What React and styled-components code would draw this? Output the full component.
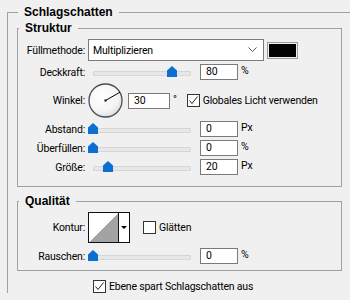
import React from "react";
import styled, { createGlobalStyle } from "styled-components";

const Global = createGlobalStyle`
  body {
    margin: 0;
    background: #f0f0f0;
    font-family: Roboto, "Liberation Sans", sans-serif;
    font-size: 10.5px;
    letter-spacing: -0.2px;
    color: #000;
    overflow: hidden;
  }
`;

const Outer = styled.fieldset`
  margin: 4px 0 0 7px;
  padding: 0 0 0 9px;
  width: 360px;
  border: 1px solid #a0a0a0;
  border-right: none;
  border-bottom: none;
  min-width: 0;
`;

const Legend = styled.legend`
  margin-left: 1px;
  padding: 0 6px;
  font-family: "Liberation Sans", Arial, sans-serif;
  font-weight: bold;
  font-size: 12px;
  letter-spacing: 0;
  line-height: 16px;
`;

const Group = styled.fieldset`
  margin: ${(p) => p.$top || 0}px 0 0 0;
  padding: 3px 0 ${(p) => p.$bottom || 0}px 0;
  width: 323px;
  border: 1px solid #a0a0a0;
  min-width: 0;
`;

const Rows = styled.div`
  display: flex;
  flex-direction: column;
  gap: ${(p) => p.$gap || 3}px;
`;

const Row = styled.div`
  display: flex;
  align-items: center;
  height: ${(p) => p.$h || 16}px;
`;

const Label = styled.span`
  width: 67px;
  margin-right: 3px;
  text-align: right;
  white-space: nowrap;
`;

const Select = styled.div`
  box-sizing: border-box;
  width: 176px;
  height: 22px;
  border: 1px solid #7a7a7a;
  background: #fff;
  display: flex;
  align-items: center;
  justify-content: space-between;
  padding: 0 6px 0 4px;
`;

const Swatch = styled.div`
  box-sizing: border-box;
  width: 31px;
  height: 17px;
  margin-left: 3px;
  border: 1px solid #9a9a9a;
  padding: 1px;
  background: #f0f0f0;
  &::after {
    content: "";
    display: block;
    width: 100%;
    height: 100%;
    background: #000;
  }
`;

const Slider = styled.div`
  position: relative;
  width: 108px;
  height: 16px;
  margin-right: 4px;
`;

const Track = styled.div`
  position: absolute;
  left: 5px;
  right: 5px;
  top: 7px;
  height: 3px;
  background: #e7e7e7;
  border: 1px solid #d6d6d6;
  border-radius: 1px;
`;

const Thumb = styled.div`
  position: absolute;
  top: 2px;
  left: ${(p) => p.$pos}px;
  width: 10px;
  height: 11px;
  background: #0b6fd1;
  clip-path: polygon(50% 0, 100% 40%, 100% 100%, 0 100%, 0 40%);
`;

const Field = styled.div`
  display: flex;
  align-items: flex-start;
  height: 16px;
`;

const Input = styled.div`
  box-sizing: border-box;
  width: ${(p) => p.$w || 38}px;
  height: 16px;
  border: 1px solid #7a7a7a;
  background: #fff;
  padding-left: 5px;
  line-height: 14px;
`;

const Unit = styled.span`
  margin-left: 3px;
  line-height: 13px;
`;

const Dial = styled.div`
  width: 35px;
  height: 35px;
  margin-right: 5px;
  svg {
    display: block;
  }
`;

const Check = styled.span`
  box-sizing: border-box;
  width: 13px;
  height: 13px;
  border: 1px solid #333;
  background: #fff;
  margin-right: 3px;
  display: inline-flex;
  svg {
    display: block;
  }
`;

const CheckRow = styled.label`
  display: flex;
  align-items: center;
  white-space: nowrap;
  margin-left: ${(p) => p.$ml || 0}px;
`;

const Contour = styled.div`
  box-sizing: border-box;
  width: 42px;
  height: 31px;
  border: 1px solid #111;
  display: flex;
  background: #fff;
`;

const ContourPreview = styled.div`
  width: 29px;
  height: 100%;
  border-right: 1px solid #111;
  background: linear-gradient(to top left, #a3a3a3 50%, #fff 50%);
`;

const ContourArrow = styled.div`
  flex: 1;
  display: flex;
  align-items: center;
  justify-content: center;
  &::after {
    content: "";
    border-left: 3px solid transparent;
    border-right: 3px solid transparent;
    border-top: 3px solid #000;
  }
`;

const Footer = styled.div`
  margin: 9px 0 0 76px;
`;

function SliderField({ label, pos, value, unit }) {
  return (
    <Row>
      <Label>{label}</Label>
      <Slider>
        <Track />
        <Thumb $pos={pos} />
      </Slider>
      <Field>
        <Input>{value}</Input>
        <Unit>{unit}</Unit>
      </Field>
    </Row>
  );
}

function Box({ checked }) {
  return (
    <Check>
      {checked && (
        <svg width="11" height="11" viewBox="0 0 11 11">
          <path d="M1.5 5.5 L4 8.5 L9.5 1.5" fill="none" stroke="#222" strokeWidth="1" />
        </svg>
      )}
    </Check>
  );
}

export default function App() {
  return (
    <>
      <Global />
      <Outer>
        <Legend>Schlagschatten</Legend>
        <Group $bottom={11}>
          <Legend>Struktur</Legend>
          <Rows>
            <Row $h={22}>
              <Label>Füllmethode:</Label>
              <Select>
                <span>Multiplizieren</span>
                <svg width="9" height="6" viewBox="0 0 9 6">
                  <path d="M0.5 0.5 L4.5 4.5 L8.5 0.5" fill="none" stroke="#555" strokeWidth="1" />
                </svg>
              </Select>
              <Swatch />
            </Row>
            <SliderField label="Deckkraft:" pos={79} value="80" unit="%" />
            <Row $h={35}>
              <Label>Winkel:</Label>
              <Dial>
                <svg width="35" height="35" viewBox="0 0 35 35">
                  <defs>
                    <radialGradient id="dg" cx="40%" cy="35%" r="70%">
                      <stop offset="0" stopColor="#ffffff" />
                      <stop offset="0.7" stopColor="#f4f4f4" />
                      <stop offset="1" stopColor="#d8d8d8" />
                    </radialGradient>
                  </defs>
                  <circle cx="17.5" cy="17.5" r="16.5" fill="url(#dg)" stroke="#4a4f5a" strokeWidth="1.3" />
                  <line x1="17.5" y1="17.5" x2="32" y2="9.2" stroke="#000" strokeWidth="1" />
                  <rect x="16.5" y="16.5" width="2" height="2" fill="#000" />
                </svg>
              </Dial>
              <Field>
                <Input $w={42}>30</Input>
                <Unit>°</Unit>
              </Field>
              <CheckRow $ml={10}>
                <Box checked />
                Globales Licht verwenden
              </CheckRow>
            </Row>
            <SliderField label="Abstand:" pos={0} value="0" unit="Px" />
            <SliderField label="Überfüllen:" pos={0} value="0" unit="%" />
            <SliderField label="Größe:" pos={15} value="20" unit="Px" />
          </Rows>
        </Group>
        <Group $top={6} $bottom={6}>
          <Legend>Qualität</Legend>
          <Rows $gap={5}>
            <Row $h={31}>
              <Label>Kontur:</Label>
              <Contour>
                <ContourPreview />
                <ContourArrow />
              </Contour>
              <CheckRow $ml={13}>
                <Box />
                Glätten
              </CheckRow>
            </Row>
            <SliderField label="Rauschen:" pos={0} value="0" unit="%" />
          </Rows>
        </Group>
        <Footer>
          <CheckRow>
            <Box checked />
            Ebene spart Schlagschatten aus
          </CheckRow>
        </Footer>
      </Outer>
    </>
  );
}
